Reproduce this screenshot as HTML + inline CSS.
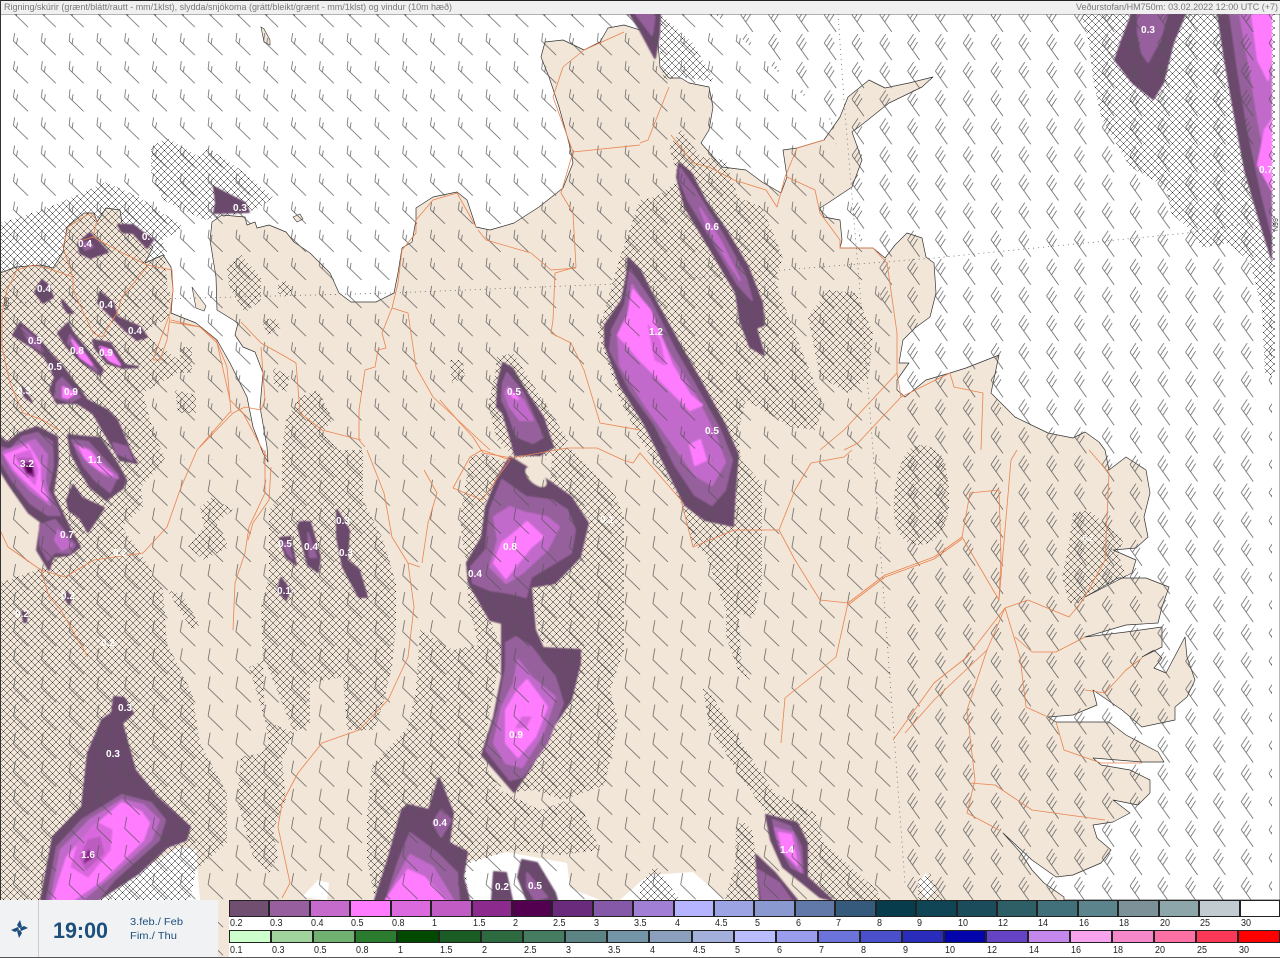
<!DOCTYPE html>
<html><head><meta charset="utf-8"><title>Veðurstofan</title>
<style>
html,body{margin:0;padding:0;background:#fff}
#w{position:relative;width:1280px;height:958px;overflow:hidden;font-family:"Liberation Sans",sans-serif}
svg{position:absolute;left:0;top:0}
polygon.a,.a{fill:#6b4a6c;stroke:#6b4a6c;stroke-width:2;stroke-linejoin:round}
.b{fill:#96609c;stroke:#96609c;stroke-width:2;stroke-linejoin:round}
.c{fill:#c26bcb;stroke:#c26bcb;stroke-width:2;stroke-linejoin:round}
.d{fill:#ff7bff;stroke:#ff7bff;stroke-width:2;stroke-linejoin:round}
.e{fill:#d968dd;stroke:#d968dd;stroke-width:1;stroke-linejoin:round}
.f{fill:#bc5cc0;stroke:#bc5cc0;stroke-width:1;stroke-linejoin:round}
.g{fill:#87278a;stroke:#87278a;stroke-width:1;stroke-linejoin:round}
.k{fill:#53004f;stroke:#53004f;stroke-width:1;stroke-linejoin:round}
.r{fill:none;stroke:#ea8350;stroke-width:.8;stroke-linejoin:round}
text.v{fill:#fff;font:bold 10px "Liberation Sans",sans-serif;text-anchor:middle}
.row{position:absolute;left:229px;width:1051px;display:flex;background:#fff}
.row i{display:block;flex:1;position:relative;box-sizing:border-box;border:1px solid #222;border-left-width:.5px;border-right-width:.5px;font-style:normal}
.row b{position:absolute;left:0;font:normal 10px "Liberation Sans",sans-serif;color:#222;white-space:nowrap;transform:scaleX(.9);transform-origin:left}
#r1{top:900px;height:17px}#r1 b{top:17px}
#r2{top:930px;height:13px}#r2 b{top:14px}
#lb{position:absolute;left:229px;top:900px;width:1051px;height:57px;background:#fff}
#panel{position:absolute;left:0;top:900px;width:218px;height:58px;background:#f1f2f4}
</style></head><body><div id="w">
<svg width="1280" height="958" viewBox="0 0 1280 958">
<defs>
<pattern id="h" width="7" height="7" patternUnits="userSpaceOnUse"><path d="M0,0L7,7M7,0L0,7" stroke="#222" stroke-width=".5" fill="none"/></pattern>
<pattern id="t1" x="11.5" y="4" width="27.8" height="28.1" patternUnits="userSpaceOnUse"><path d="M2,9L16.5,23M2,9L3,1M5,12L6,6" stroke="#555" stroke-width=".7" fill="none"/></pattern>
<pattern id="t2" x="11.5" y="1" width="27.8" height="28.1" patternUnits="userSpaceOnUse"><path d="M2,12.5L17,27M2,12.5L4,1" stroke="#555" stroke-width=".7" fill="none"/></pattern>
<pattern id="t3" x="17" y="33" width="27.8" height="28.1" patternUnits="userSpaceOnUse"><path d="M1,10L13,27M1,10L7,1M3.5,13.5L9,5M6,17L11,9" stroke="#555" stroke-width=".7" fill="none"/></pattern>
<clipPath id="cm"><rect x="0" y="14" width="1272" height="944"/></clipPath>
<filter id="soft" x="-5%" y="-5%" width="110%" height="110%"><feGaussianBlur stdDeviation=".8"/></filter>
</defs>
<rect width="1280" height="958" fill="#f2e6d8"/>
<!-- sea -->
<path id="sea" fill="#fff" stroke="#333" stroke-width=".7" stroke-linejoin="round" d="M0,273L16,267L41,265L53,268L63,252L67,227L84,213L94,213L97,222L106,208L120,210L122,223L136,233L147,242L153,247L145,263L163,255L171,267L173,290L171,313L196,323L217,340L230,363L247,397L253,427L263,453L268,462L267,447L260,407L263,373L255,352L243,347L235,335L238,323L217,310L216,277L210,240L212,222L222,215L245,217L247,225L255,222L257,228L269,225L286,232L294,242L310,253L330,273L339,293L351,302L376,302L394,293L398,273L402,248L412,242L416,220L416,208L433,197L457,192L467,200L476,227L490,230L514,223L539,207L563,188L573,163L569,143L559,107L549,77L541,57L545,42L563,40L584,50L600,42L608,28L624,25L640,30L658,42L660,67L669,78L681,78L689,83L709,87L713,107L709,130L701,143L722,167L746,170L762,182L781,193L787,177L783,150L797,148L824,140L840,117L848,97L869,80L885,88L909,83L933,77L922,87L889,103L864,123L852,132L862,160L852,187L828,203L820,208L824,217L840,220L842,240L840,248L873,248L885,258L895,245L907,233L922,238L926,257L934,263L936,293L930,317L915,328L903,340L899,363L909,363L897,380L897,390L905,397L926,380L950,373L966,368L999,355L991,393L1015,417L1048,433L1073,438L1085,432L1099,442L1105,450L1109,470L1126,457L1146,470L1150,493L1144,517L1148,537L1136,548L1113,550L1136,560L1132,573L1085,597L1118,578L1146,578L1169,587L1162,607L1158,623L1126,625L1085,637L1126,632L1162,627L1162,647L1142,657L1154,650L1162,658L1154,668L1166,673L1185,637L1187,657L1195,680L1187,697L1175,707L1175,720L1142,727L1122,710L1093,690L1097,705L1073,715L1048,717L1056,722L1109,722L1126,735L1158,752L1164,762L1142,762L1093,758L1101,765L1130,770L1150,780L1150,793L1138,805L1113,800L1130,813L1113,822L1093,825L1097,838L1111,850L1101,863L1073,875L1056,877L1032,860L1003,833L1020,852L1032,870L1044,883L1064,897L1064,900L1280,900L1280,14L0,14Z"/>
<g fill="#fff">
<polygon points="98,900 135,873 180,847 196,850 200,900"/>
<polygon points="461,900 465,863 506,852 567,863 570,888 600,900"/>
<polygon points="302,897 318,880 329,883 327,900"/>
<polygon points="918,883 926,873 934,890 926,900"/>
<polygon points="640,882 650,875 693,872 725,900 620,900"/>
</g>
<g fill="#f2e6d8" stroke="#333" stroke-width=".6">
<polygon points="261,27 264,29 270,40 270,45 264,42"/>
<polygon points="293,217 300,214 303,219 297,222"/>
<polygon points="192,287 197,294 206,306 204,311 196,308"/>
</g>
<!-- hatch -->
<path fill="url(#h)" d="M151,147L167,138L200,157L208,148L241,170L273,197L261,207L245,213L204,220L163,200L151,173Z
M0,223L20,217L49,207L73,197L106,182L139,197L184,227L163,240L167,280L169,317L143,333L188,367L143,393L151,423L165,460L141,487L143,507L122,527L143,557L163,590L167,643L192,693L200,743L227,793L227,843L196,870L190,900L0,900L0,583L45,567L60,540L30,500L0,470Z
M180,347L192,347L192,373L180,373Z M175,390L196,395L196,413L178,413Z M151,283L170,290L170,305L155,305Z
M227,267L241,255L261,277L261,300L245,313L229,287Z M278,283L286,281L292,290L286,297L278,293Z M261,320L275,318L281,328L268,335Z
M273,367L290,377L286,393L274,384Z
M300,397L318,390L333,420L322,433L339,450L363,450L363,500L382,537L396,583L396,627L392,667L384,700L375,730L347,730L343,677L310,683L310,723L294,733L265,720L261,607L269,577L269,510L282,493L282,450L286,420Z
M249,667L265,720L269,743L261,753L241,757L237,800L253,857L269,873L278,857L273,830L286,800L282,760L294,733L265,660Z
M200,507L212,497L233,510L216,523L229,547L204,560L188,547L204,527Z M167,590L182,595L200,625L192,630Z
M461,517L486,505L490,620L502,650L490,710L482,760L500,790L540,810L568,800L585,815L600,850L560,855L510,850L465,865L469,900L375,900L367,860L367,817L372,765L396,740L408,727L416,690L420,630L453,650L478,645L468,600L466,560Z
M553,447L570,448L615,495L624,517L624,650L610,690L618,720L605,785L563,800L535,790L514,792L560,720L580,660L540,640L531,590L580,560L590,520L550,480Z
M497,357L513,353L568,440L555,455L515,458L497,440L488,405L495,375Z M450,360L463,360L465,378L452,383Z
M470,457L483,453L507,463L483,507L463,547L460,517Z
M620,257L640,200L656,197L679,180L669,147L681,130L701,157L726,160L738,197L762,207L783,257L775,280L795,333L824,407L815,430L791,427L746,400L738,433L741,460L762,483L762,583L754,617L726,610L705,553L693,545L680,500L640,440L620,400L598,333Z
M726,600L738,607L742,667L750,680L738,670L726,637Z
M703,688L713,697L746,750L775,793L815,813L824,843L877,890L881,900L824,900L766,813L738,773L709,727Z
M736,827L742,820L752,830L760,880L765,900L725,900L735,865Z
M640,885L655,865L680,900L640,900Z M918,880L930,873L942,900L918,900Z
M920,445C945,445 950,475 949,505C948,530 935,545 918,545C900,545 892,525 894,500C896,470 905,445 920,445Z
M808,317L828,290L856,293L873,333L869,377L848,393L820,377Z
M1073,513L1089,510L1124,540L1118,553L1126,577L1089,593L1083,603L1069,603L1062,577L1069,543Z
M660,14L693,43L715,82L681,77L664,80L660,60Z
M1081,14L1275,14L1275,375L1265,375L1262,310L1250,262L1228,243L1203,248L1187,227L1171,213L1166,187L1130,167L1101,117L1093,80L1089,43Z"/>
<!-- precipitation -->
<g filter="url(#soft)">
<polygon class="a" points="503,363 512,368 527,393 543,417 553,447 540,455 515,455 512,443 503,413 497,407 498,383"/>
<polygon class="b" points="507,373 523,393 535,420 543,437 533,443 517,437 507,410 502,400 503,383"/>
<polygon class="c" points="508,387 523,400 533,420 520,420 510,407 505,393"/>
<polygon class="d" points="510,392 518,399 514,398"/>

<polygon class="a" points="510,457 547,480 571,497 588,523 580,557 555,583 531,587 535,630 543,648 580,650 580,663 571,700 551,730 531,767 514,792 482,755 494,717 502,677 502,623 490,620 469,583 467,563 482,537 486,507 498,477"/>
<polygon class="b" points="502,480 526,497 551,500 567,510 575,530 571,553 531,577 526,597 510,593 490,590 473,583 471,567 486,550 490,510"/>
<polygon class="c" points="510,507 526,513 547,517 559,527 547,550 522,573 506,583 490,567 498,540 494,517"/>
<polygon class="d" points="527,522 543,537 531,547 518,563 506,578 494,563 502,543 518,530"/>
<polygon class="b" points="516,637 531,647 555,677 563,703 547,743 522,777 510,780 486,750 498,710 506,667 506,643"/>
<polygon class="c" points="518,660 531,677 555,697 543,733 522,767 506,763 494,743 502,707 514,683"/>
<polygon class="d" points="527,680 547,707 535,737 518,757 506,743 506,710 518,690"/>
<polygon class="e" points="522,717 531,717 526,727 516,728"/>
<ellipse cx="536" cy="477" rx="13" ry="6.5" transform="rotate(42 536 477)" fill="#f2e6d8"/>

<polygon class="a" points="628,258 640,270 655,300 680,345 700,380 725,425 738,455 735,490 733,526 705,520 685,505 665,465 645,425 620,385 605,345 605,325 622,300 627,275"/>
<polygon class="b" points="630,270 650,300 675,350 695,385 720,430 732,460 725,490 712,505 695,495 675,465 655,425 630,390 610,350 612,330 625,305"/>
<polygon class="c" points="632,285 650,315 670,355 695,395 715,435 725,462 712,485 695,475 670,440 645,405 620,365 618,335 628,320"/>
<polygon class="d" points="633,290 650,310 672,365 690,395 702,405 690,410 665,385 640,360 618,335 628,315"/>
<polygon class="d" points="690,445 700,440 706,460 695,465"/>
<polygon class="e" points="648,325 660,340 665,365 655,360"/>

<polygon class="a" points="679,163 691,173 705,200 726,230 748,267 762,303 764,325 756,328 764,355 750,347 740,320 736,293 709,247 685,207 677,177"/>
<polygon class="b" points="680,168 695,190 720,230 745,275 752,300 738,285 712,240 688,200 680,180"/>
<polygon class="c" points="700,208 720,240 740,280 728,262 708,228"/>

<polygon class="a" points="630,14 660,14 659,35 655,58 640,30"/>
<polygon class="b" points="636,14 655,14 652,35"/>
<polygon class="a" points="1132,14 1185,14 1173,43 1163,83 1153,99 1133,83 1115,60 1122,40"/>
<polygon class="b" points="1138,14 1167,14 1160,40 1148,62 1142,53 1138,33"/>
<g clip-path="url(#cm)">
<polygon class="a" points="1218,14 1272,14 1272,260 1258,215 1245,170 1232,100 1225,60"/>
<polygon class="b" points="1230,14 1272,14 1272,235 1262,195 1248,130 1238,70"/>
<polygon class="c" points="1240,14 1272,14 1272,180 1260,130 1250,70"/>
<polygon class="d" points="1252,14 1272,14 1272,50 1268,80 1258,60"/>
<polygon class="d" points="1272,120 1265,130 1258,165 1272,190"/>
</g>

<polygon class="a" points="78,243 90,233 97,240 108,252 90,258 80,253"/>
<polygon class="b" points="82,243 90,242 93,247 85,250"/>
<polygon class="a" points="118,225 133,225 153,240 147,248 133,233 122,232"/>
<polygon class="a" points="214,187 245,203 249,212 214,213 216,203"/>
<polygon class="a" points="42,280 48,285 53,297 43,303 35,292"/>
<polygon class="a" points="62,300 73,313 68,313 63,305"/>
<polygon class="a" points="100,292 113,303 117,317 140,327 147,337 137,340 125,330 113,318 98,303"/>
<polygon class="a" points="20,323 37,337 50,353 63,367 87,400 107,410 117,420 133,457 137,463 120,460 107,437 93,413 77,403 57,403 50,390 55,377 45,357 32,347 13,335"/>
<polygon class="b" points="22,328 37,340 43,352 30,343"/>
<polygon class="b" points="62,378 80,397 70,402 55,397 57,383"/>
<polygon class="d" points="63,387 75,393 68,398 63,397"/>
<polygon class="b" points="113,443 127,447 132,460 117,453"/>
<polygon class="a" points="68,323 73,333 87,350 103,370 100,375 83,363 67,347 58,333"/>
<polygon class="b" points="70,335 88,358 98,372 85,362 68,343"/>
<polygon class="d" points="72,340 85,355 92,365 80,357"/>
<polygon class="a" points="93,340 110,343 125,365 138,367 123,368 107,363 95,348"/>
<polygon class="d" points="100,347 110,350 120,365 108,360"/>
<polygon class="a" points="22,387 32,402 25,397"/>

<polygon class="a" points="0,437 7,443 20,433 37,427 57,437 58,460 53,493 69,527 80,547 69,555 53,557 49,570 37,550 41,522 29,513 8,483 0,470"/>
<polygon class="b" points="0,447 10,450 22,437 37,433 52,442 53,465 48,490 60,515 48,515 30,503 12,480 0,460"/>
<polygon class="c" points="3,452 20,445 35,440 47,455 45,480 50,505 30,490 12,470"/>
<polygon class="d" points="5,455 18,450 28,445 40,465 40,480 47,500 30,485 15,470"/>
<polygon class="e" points="15,455 30,450 38,470 35,485 22,470"/>
<polygon class="f" points="18,458 32,458 35,475 25,470"/>
<polygon class="g" points="22,462 32,463 34,477 26,473"/>
<polygon class="k" points="25,465 32,465 32,473 28,472"/>
<polygon class="b" points="40,525 55,520 75,545 70,553 55,552 48,560 40,545"/>
<polygon class="c" points="58,530 72,545 62,550 55,540"/>
<polygon class="a" points="68,435 87,437 100,438 107,448 118,465 126,480 123,488 106,500 90,487 80,470 71,453"/>
<polygon class="b" points="72,440 88,442 100,455 118,475 110,492 95,480 83,465"/>
<polygon class="c" points="75,445 90,450 102,463 118,478 105,475 88,462"/>
<polygon class="d" points="80,447 90,452 100,465 112,475 100,470 85,458"/>
<polygon class="a" points="73,485 82,498 104,508 88,532 80,518 69,510 67,500"/>
<polygon class="a" points="280,538 290,537 296,565 286,557"/>
<polygon class="b" points="283,543 288,543 292,558 287,552"/>
<polygon class="a" points="300,522 310,522 320,557 318,572 308,565 298,527"/>
<polygon class="b" points="308,533 316,557 310,557"/>
<polygon class="a" points="337,510 349,530 347,560 359,570 367,597 359,597 343,567 337,537"/>
<polygon class="a" points="281,578 290,590 286,600 278,590"/>
<polygon class="a" points="67,592 71,598 69,604 65,598"/>
<polygon class="a" points="22,612 27,612 26,622 24,622"/>

<polygon class="a" points="114,697 124,698 133,713 122,723 135,770 157,797 190,827 186,840 167,847 139,873 98,900 41,900 53,837 82,807 88,753 102,720 112,713"/>
<polygon class="b" points="122,795 151,803 165,820 159,840 114,880 98,900 47,900 57,847 82,820"/>
<polygon class="c" points="122,800 143,805 159,820 151,840 110,877 82,900 51,900 61,850 90,820"/>
<polygon class="d" points="122,803 141,812 149,823 143,840 102,880 73,900 53,900 67,857 94,827"/>
<polygon class="e" points="98,823 112,830 110,850 88,877 71,867 78,843"/>
<polygon class="f" points="88,840 100,837 104,853 86,870 80,857"/>
<polygon class="g" points="88,850 94,857 84,863"/>

<polygon class="a" points="439,778 453,813 449,843 467,852 463,877 469,900 375,900 388,860 402,810 408,805 429,810 433,797"/>
<polygon class="b" points="441,810 451,820 441,837 433,823"/>
<polygon class="b" points="410,833 437,853 457,873 459,900 386,900 398,863"/>
<polygon class="c" points="410,855 433,867 453,900 386,900 398,877"/>
<polygon class="d" points="408,870 424,877 445,900 386,900 398,883"/>
<polygon class="a" points="494,872 506,873 512,900 492,900"/>
<polygon class="a" points="522,860 537,863 555,893 557,900 527,900 518,877"/>
<polygon class="b" points="527,873 547,897 535,900 527,887"/>
<polygon class="a" points="766,815 797,823 807,843 807,877 832,900 820,897 783,867 771,840"/>
<polygon class="b" points="773,820 791,827 801,847 803,873 791,867 777,840"/>
<polygon class="c" points="775,828 793,833 799,853 801,872 781,850"/>
<polygon class="d" points="779,833 791,835 795,853 797,865 783,850"/>
<polygon class="a" points="756,855 775,873 797,900 760,900"/>
<polygon class="b" points="758,870 779,883 791,900 762,900"/>
</g>
<!-- graticule -->
<g fill="none" stroke="#666" stroke-width=".8" stroke-dasharray="1 4">
<path d="M0,303L392,293L640,283L758,272L934,258L1187,233L1255,222"/>
<path d="M838,14L844,100L869,400L873,450L905,883"/>
</g>
<!-- wind -->
<g clip-path="url(#cm)">
<rect width="1280" height="958" fill="url(#t1)" clip-path="polygon(0 0,700px 0,830px 120px,860px 240px,900px 350px,900px 460px,0 460px)"/>
<rect width="1280" height="958" fill="url(#t2)" clip-path="polygon(0 460px,900px 460px,900px 958px,0 958px)"/>
<rect width="1280" height="958" fill="url(#t3)" clip-path="polygon(700px 0,1280px 0,1280px 958px,900px 958px,900px 350px,860px 240px,830px 120px)"/>
</g>
<!-- roads -->
<g class="r">
<polyline points="624,32 584,50 563,67 553,97 573,152 561,193 573,213 576,267 555,273 553,320 551,333 571,343 584,370 600,423 640,430"/>
<polyline points="573,152 640,145"/>
<polyline points="478,230 486,240 531,253 551,270 576,268"/>
<polyline points="416,220 433,200 457,193 476,227"/>
<polyline points="416,220 416,233 402,250 398,283 392,308 382,333 386,348 378,350 375,367 365,370 359,410 359,440 365,447"/>
<polyline points="392,308 408,313 416,367 433,397 461,423 490,450"/>
<polyline points="241,322 261,343 286,357 296,363 300,413 322,430 361,440"/>
<polyline points="261,347 265,400 261,410 245,407 233,413 200,447"/>
<polyline points="171,320 200,327 216,340 227,367 231,413"/>
<polyline points="147,267 122,297 117,313 102,337 93,333 73,290 73,277"/>
<polyline points="73,277 47,268 33,265 17,270 7,290 2,313 2,347 10,383 23,413 43,420 58,430"/>
<polyline points="73,277 63,247 68,227 90,213 97,220 93,237 77,242"/>
<polyline points="93,237 117,250 147,265 172,270 173,290 170,313 153,360 160,360 167,340 170,317"/>
<polyline points="170,322 200,327 217,343 230,400 243,413 260,445 267,457"/>
<polyline points="230,412 197,450 180,490 167,527 143,553 94,560 65,577 41,570 8,547 0,530"/>
<polyline points="41,570 49,597 61,610 78,640 88,657"/>
<polyline points="265,450 265,493 249,527 245,553 235,583 233,630"/>
<polyline points="271,467 269,500 253,523 248,540"/>
<polyline points="367,450 384,493 392,537 408,563 420,567"/>
<polyline points="408,563 414,607 408,657 388,700 359,730 322,743 298,773 282,803 278,827 290,883 282,898"/>
<polyline points="424,470 437,493 428,523 422,563"/>
<polyline points="453,488 482,500 510,460 482,450 470,457 453,488"/>
<polyline points="440,400 460,423 473,437 483,453 512,458 567,448 597,448 623,460 633,463 640,453 681,500 693,547 734,530 779,530 795,490 811,463 844,457 852,450"/>
<polyline points="779,530 795,560 820,600 848,603 885,575 934,557 962,537 999,600 1011,460 1017,450"/>
<polyline points="848,605 885,577 934,559 962,539"/>
<polyline points="962,537 970,493 999,490 1001,557 999,600"/>
<polyline points="848,603 836,657 785,698 781,743"/>
<polyline points="1005,608 967,657 934,683 893,740"/>
<polyline points="1005,608 987,650 934,700 905,733"/>
<polyline points="1005,608 1020,657 1026,707 1048,717"/>
<polyline points="1005,608 1028,600 1069,617 1083,600 1105,560 1109,473 1089,450"/>
<polyline points="1015,637 1032,652 1056,652 1085,637"/>
<polyline points="987,650 967,710 975,780 967,813 999,830"/>
<polyline points="970,783 995,785 1032,810 1105,820"/>
<polyline points="1056,722 1064,750 1101,763 1142,763"/>
<polyline points="1085,690 1105,693 1126,670 1142,658"/>
<polyline points="669,87 648,140 640,143"/>
<polyline points="671,135 693,163 709,167 734,180 766,190 777,207 785,177 797,148 824,140"/>
<polyline points="787,177 815,190 820,213 840,240 840,248 873,248 887,263 897,333 897,373 901,397 858,443 844,450"/>
<polyline points="897,373 844,430 820,450"/>
<polyline points="901,397 950,373 954,387 983,393 981,450"/>
</g>
<!-- value labels -->
<g>
<text class="v" x="240" y="211">0.3</text><text class="v" x="85" y="247">0.4</text><text class="v" x="146" y="240">0.</text>
<text class="v" x="44" y="292">0.4</text><text class="v" x="106" y="308">0.4</text><text class="v" x="135" y="334">0.4</text>
<text class="v" x="35" y="344">0.5</text><text class="v" x="77" y="354">0.8</text><text class="v" x="106" y="356">0.9</text>
<text class="v" x="55" y="370">0.5</text><text class="v" x="71" y="395">0.9</text><text class="v" x="24" y="394">0.3</text>
<text class="v" x="27" y="467">3.2</text><text class="v" x="95" y="463">1.1</text><text class="v" x="67" y="538">0.7</text>
<text class="v" x="285" y="547">0.5</text><text class="v" x="311" y="550">0.4</text><text class="v" x="343" y="524">0.3</text>
<text class="v" x="346" y="556">0.3</text><text class="v" x="284" y="594">0.1</text><text class="v" x="514" y="395">0.5</text>
<text class="v" x="510" y="550">0.8</text><text class="v" x="475" y="577">0.4</text><text class="v" x="656" y="335">1.2</text>
<text class="v" x="712" y="434">0.5</text><text class="v" x="712" y="230">0.6</text><text class="v" x="1148" y="33">0.3</text>
<text class="v" x="1266" y="173">0.7</text><text class="v" x="516" y="738">0.9</text><text class="v" x="125" y="711">0.3</text>
<text class="v" x="113" y="757">0.3</text><text class="v" x="88" y="858">1.6</text><text class="v" x="440" y="826">0.4</text>
<text class="v" x="502" y="890">0.2</text><text class="v" x="535" y="889">0.5</text><text class="v" x="787" y="853">1.4</text>
<text class="v" x="607" y="523">0.1</text><text class="v" x="68" y="599">0.2</text><text class="v" x="22" y="617">0.2</text><text class="v" x="108" y="646">0.2</text><text class="v" x="120" y="556">0.2</text><text class="v" x="1088" y="541" style="font-size:8px">0.2</text>
</g>
<text x="0" y="0" transform="translate(9,310) rotate(-90)" font-family="Liberation Sans" font-size="7" fill="#333">N99</text>
<text x="0" y="0" transform="translate(1278,231) rotate(-90)" font-family="Liberation Sans" font-size="7" fill="#333">N99</text>
<!-- header -->
<rect x="0" y="1" width="1280" height="13" fill="#f0f0f0"/>
<rect x="0" y="0" width="1280" height="1" fill="#222"/>
<rect x="0" y="0" width="1" height="958" fill="#333"/>
<text x="4" y="10" font-family="Liberation Sans" font-size="9.3" fill="#777" textLength="448" lengthAdjust="spacingAndGlyphs">Rigning/skúrir (grænt/blátt/rautt - mm/1klst), slydda/snjókoma (grátt/bleikt/grænt - mm/1klst) og vindur (10m hæð)</text>
<text x="1076" y="10" font-family="Liberation Sans" font-size="9.3" fill="#777" textLength="202" lengthAdjust="spacingAndGlyphs">Veðurstofan/HM750m: 03.02.2022 12:00 UTC (+7)</text>
</svg>
<div id="lb"></div>
<div class="row" id="r1">
<i style="background:#704f70"><b>0.2</b></i><i style="background:#985f9e"><b>0.3</b></i><i style="background:#c46bcc"><b>0.4</b></i><i style="background:#ff7bff"><b>0.5</b></i><i style="background:#da6ade"><b>0.8</b></i><i style="background:#c05cc4"><b>1</b></i><i style="background:#8c2a8e"><b>1.5</b></i><i style="background:#540050"><b>2</b></i><i style="background:#6b2b7c"><b>2.5</b></i><i style="background:#8558a8"><b>3</b></i><i style="background:#a17fd4"><b>3.5</b></i><i style="background:#b6b4ff"><b>4</b></i><i style="background:#9da4e3"><b>4.5</b></i><i style="background:#8a9ad0"><b>5</b></i><i style="background:#6079a8"><b>6</b></i><i style="background:#355a7c"><b>7</b></i><i style="background:#063c4c"><b>8</b></i><i style="background:#0f4555"><b>9</b></i><i style="background:#1b4c5c"><b>10</b></i><i style="background:#2e5f66"><b>12</b></i><i style="background:#42707a"><b>14</b></i><i style="background:#5c848c"><b>16</b></i><i style="background:#7c9198"><b>18</b></i><i style="background:#8da6aa"><b>20</b></i><i style="background:#c2ccd0"><b>25</b></i><i style="background:#ffffff"><b>30</b></i>
</div>
<div class="row" id="r2">
<i style="background:#ccffcc"><b>0.1</b></i><i style="background:#a0d49c"><b>0.3</b></i><i style="background:#70b070"><b>0.5</b></i><i style="background:#2c7c30"><b>0.8</b></i><i style="background:#004a00"><b>1</b></i><i style="background:#1a5c24"><b>1.5</b></i><i style="background:#2e6a40"><b>2</b></i><i style="background:#467c62"><b>2.5</b></i><i style="background:#5c8484"><b>3</b></i><i style="background:#7494a8"><b>3.5</b></i><i style="background:#8ba0bc"><b>4</b></i><i style="background:#a4b0dc"><b>4.5</b></i><i style="background:#b9bcff"><b>5</b></i><i style="background:#9a9cec"><b>6</b></i><i style="background:#6c74dc"><b>7</b></i><i style="background:#4a50cc"><b>8</b></i><i style="background:#2a2cbc"><b>9</b></i><i style="background:#0404ac"><b>10</b></i><i style="background:#6444c4"><b>12</b></i><i style="background:#c488ec"><b>14</b></i><i style="background:#f8a4ec"><b>16</b></i><i style="background:#f488c8"><b>18</b></i><i style="background:#fc70a4"><b>20</b></i><i style="background:#fc3858"><b>25</b></i><i style="background:#ff0000"><b>30</b></i>
</div>
<div id="panel">
<svg width="218" height="58" viewBox="0 900 218 58">
<rect x="38" y="900" width="1" height="57" fill="#d2c9cf"/>
<g fill="#1d4f7c">
<polygon points="20,920 22,927 19,928 17,925"/>
<polygon points="28,928 21,931 20,928 24,926"/>
<polygon points="19,938 17,931 20,930 22,933"/>
<polygon points="11,930 18,927 19,930 15,932"/>
</g>
<text x="53" y="938" font-family="Liberation Sans" font-weight="bold" font-size="22" fill="#1d4f7c" textLength="55" lengthAdjust="spacingAndGlyphs">19:00</text>
<text x="130" y="925" font-family="Liberation Sans" font-size="10.5" fill="#1d4f7c" textLength="53" lengthAdjust="spacingAndGlyphs">3.feb./ Feb</text>
<text x="130" y="939" font-family="Liberation Sans" font-size="10.5" fill="#1d4f7c" textLength="47" lengthAdjust="spacingAndGlyphs">Fim./ Thu</text>
</svg>
</div>
<div style="position:absolute;left:0;top:957px;width:1280px;height:1px;background:#555"></div>
</div></body></html>
